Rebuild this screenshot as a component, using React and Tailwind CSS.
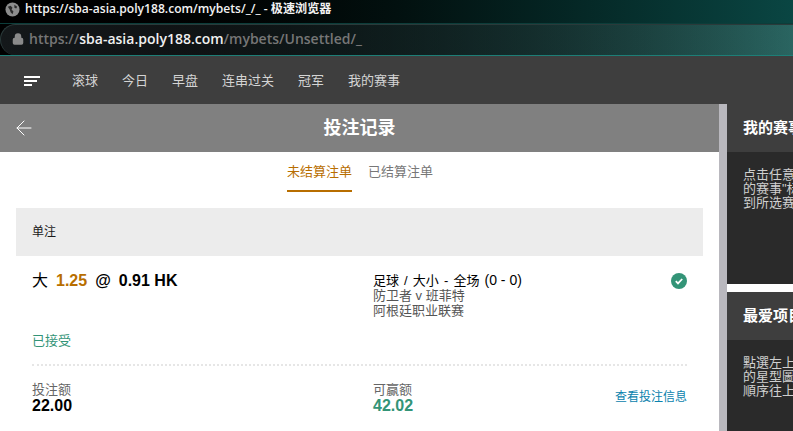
import { ArrowLeft, Lock } from "lucide-react";

const cjk = "font-['Liberation_Sans','Noto_Sans_CJK_SC',sans-serif]";

const navItems = ["滚球", "今日", "早盘", "连串过关", "冠军", "我的赛事"];

function BrowserChrome() {
  return (
    <div className="h-[56px] shrink-0 font-['Open_Sans','Noto_Sans_CJK_SC',sans-serif]">
      {/* title bar */}
      <div className="flex h-[23px] items-center gap-[5px] bg-gradient-to-r from-[#000000] via-[#02100f] to-[#0a4643] pb-[5px] pl-[5px] text-[12.1px] font-semibold leading-none text-[#f2f2f2]">
        <svg viewBox="0 0 16 16" className="h-[15px] w-[15px]">
          <circle cx="8" cy="8" r="7.5" fill="#8c8c8c" />
          <path d="M3 5l3-1 2 2-1 2 2 2-1 3-2-2-1-3zM10 3l3 2-1 2-2-1z" fill="#2b2b2b" />
        </svg>
        <span>https://sba-asia.poly188.com/mybets/_/_ - 极速浏览器</span>
      </div>
      <div className="h-px bg-[#0c3d3a]" />
      {/* address bar */}
      <div className="h-[31px] bg-gradient-to-r from-[#000000] to-[#2a6561]">
        <div className="flex h-full items-center gap-[5px] rounded-l-[16px] border-l border-t border-[#2a3a3a] bg-gradient-to-r from-[#14181a] to-transparent pb-[2px] pl-[11px] text-[14px] font-semibold leading-none">
          <Lock size={12} strokeWidth={3} className="text-[#8a8a8a]" fill="#8a8a8a" />
          <span className="text-[#767676]">
            https://<span className="text-[#f0f0f0]">sba-asia.poly188.com</span>/mybets/Unsettled/_
          </span>
        </div>
      </div>
      <div className="h-px bg-[#1d7f77]" />
    </div>
  );
}

function NavBar() {
  return (
    <div className={`flex h-[48px] shrink-0 items-center bg-[#3e3e3e] pl-[24px] pt-[1px] text-[13px] text-[#d4d4d4] ${cjk}`}>
      <div className="mr-[32px] flex w-[16px] flex-col gap-[2px]">
        <div className="h-[2px] w-[16px] bg-white" />
        <div className="h-[2px] w-[13px] bg-white" />
        <div className="h-[2px] w-[8px] bg-white" />
      </div>
      <div className="flex gap-[24px]">
        {navItems.map((item) => (
          <span key={item}>{item}</span>
        ))}
      </div>
    </div>
  );
}

function BetCard() {
  return (
    <div className="mx-[16px] mt-[16px]">
      <div className="flex h-[48px] items-center bg-[#ececec] px-[16px] text-[12px] text-[#1a1a1a]">单注</div>
      <div className="px-[16px] pt-[15px]">
        <div className="flex h-[60px]">
          <div className="flex w-[341px] shrink-0 items-start gap-[8px] text-[16px] font-bold leading-[20px] text-black">
            <span className="font-normal">大</span>
            <span className="text-[#b86e00]">1.25</span>
            <span>@</span>
            <span>0.91 HK</span>
          </div>
          <div className="flex-1 pt-[2px] text-[13px] leading-[15px] text-[#555555]">
            <div className="text-black [word-spacing:1.5px]">
              足球 / 大小 - 全场 <span className="text-[14px] [word-spacing:0]">(0 - 0)</span>
            </div>
            <div>防卫者 v 班菲特</div>
            <div>阿根廷职业联赛</div>
          </div>
          <svg viewBox="0 0 16 16" className="mt-[2px] h-[16px] w-[16px]">
            <circle cx="8" cy="8" r="8" fill="#339477" />
            <path d="M4.8 8.2l2.2 2.2 4.2-4.4" fill="none" stroke="#fff" strokeWidth="1.8" />
          </svg>
        </div>
        <div className="text-[13px] leading-[20px] text-[#339477]">已接受</div>
        <div className="mt-[13px] border-t-2 border-dotted border-[#e6e6e6]" />
        <div className="mt-[16px] flex">
          <div className="w-[341px] shrink-0 text-[13px] leading-[15px] text-[#666666]">
            <div>投注额</div>
            <div className="text-[16px] font-bold leading-[17px] text-black">22.00</div>
          </div>
          <div className="flex-1 text-[13px] leading-[15px] text-[#666666]">
            <div>可赢额</div>
            <div className="text-[16px] font-bold leading-[17px] text-[#339477]">42.02</div>
          </div>
          <a className="mt-[5px] text-[12px] leading-[20px] text-[#0a82ad]">查看投注信息</a>
        </div>
      </div>
    </div>
  );
}

function MainPanel() {
  return (
    <div className="w-[719px] shrink-0 bg-white">
      <div className="relative flex h-[48px] items-center justify-center bg-[#808080] pt-[1px] text-[18px] font-bold text-white">
        <ArrowLeft size={24} strokeWidth={1} className="absolute left-[12px] top-[12px]" />
        投注记录
      </div>
      <div className="flex h-[40px] justify-center gap-[16px] pl-[1px] text-[13px]">
        <span className="h-[40px] border-b-2 border-[#b86e00] pt-[1px] leading-[38px] text-[#b86e00]">未结算注单</span>
        <span className="pt-[1px] leading-[38px] text-[#777777]">已结算注单</span>
      </div>
      <BetCard />
    </div>
  );
}

function SidePanel() {
  return (
    <div className="flex-1 overflow-hidden">
      <div className="w-[260px] bg-white">
        <div className="flex h-[48px] items-center bg-[#3e3e3e] pl-[16px] pt-[1px] text-[15px] font-bold text-white">我的赛事</div>
        <div className="h-[132px] bg-[#2a2a2a] px-[16px] pt-[16px] text-[13px] leading-[14px] text-[#cfcfcf]">
          <div>点击任意赛事旁的星型图</div>
          <div>的赛事"标签页，</div>
          <div>到所选赛事</div>
        </div>
        <div className="h-[8px]" />
        <div className="flex h-[48px] items-center bg-[#3e3e3e] pl-[16px] pt-[1px] text-[15px] font-bold text-white">最爱项目</div>
        <div className="h-[91px] bg-[#2a2a2a] px-[16px] pt-[16px] text-[13px] leading-[14px] text-[#cfcfcf]">
          <div>點選左上角</div>
          <div>的星型圖示</div>
          <div>順序往上排</div>
        </div>
      </div>
    </div>
  );
}

export default function App() {
  return (
    <div className={`flex h-[431px] w-[793px] flex-col overflow-hidden bg-white ${cjk}`}>
      <BrowserChrome />
      <NavBar />
      <div className="flex min-h-0 flex-1 overflow-hidden">
        <MainPanel />
        <div className="w-[8px] shrink-0 bg-[#b9b8be]" />
        <SidePanel />
      </div>
    </div>
  );
}
